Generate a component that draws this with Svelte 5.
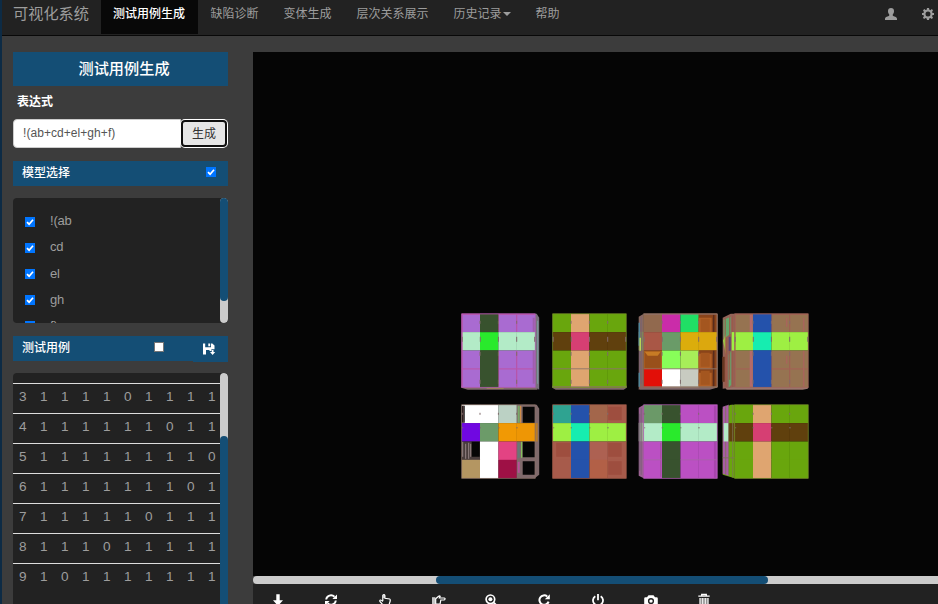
<script>
  const nav = [
    { label: '测试用例生成', active: true },
    { label: '缺陷诊断' },
    { label: '变体生成' },
    { label: '层次关系展示' },
    { label: '历史记录', caret: true },
    { label: '帮助' }
  ];
  let expression = $state('!(ab+cd+el+gh+f)');
  const models = ['!(ab', 'cd', 'el', 'gh', 'f)'];
  const cases = [
    [3, 1, 1, 1, 1, 0, 1, 1, 1, 1],
    [4, 1, 1, 1, 1, 1, 1, 0, 1, 1],
    [5, 1, 1, 1, 1, 1, 1, 1, 1, 0],
    [6, 1, 1, 1, 1, 1, 1, 1, 0, 1],
    [7, 1, 1, 1, 1, 1, 0, 1, 1, 1],
    [8, 1, 1, 1, 0, 1, 1, 1, 1, 1],
    [9, 1, 0, 1, 1, 1, 1, 1, 1, 1]
  ];
  const tools = ['down', 'refresh', 'up', 'right', 'zoom', 'repeat', 'power', 'camera', 'trash'];

  const P = '#a96bd1', D = '#38522e', M = '#b3ebc7', G = '#29ea2c';
  const L = '#69a60d', O = '#dfa570', B = '#60400d', K = '#d63f73';
  const T = '#967351', U = '#2452ab', Y = '#9eef43', A = '#16edb0';
  const R = '#a75b4b', V = '#bb50c3', W = '#ffffff', N = '#060606', H = '#806a6b';
  // Sixteen face colours per cube, row by row.
  const cubes = [
    { x: 462, y: 314, side: 'right', bottom: true, line: '#b75bb2', c: [P, D, P, P, M, G, M, M, P, D, P, P, P, D, P, P] },
    { x: 553, y: 314, side: '', bottom: true, line: '#78902a', c: [L, O, L, L, B, K, B, B, L, O, L, L, L, O, L, L] },
    { x: 644, y: 314, side: 'left', bottom: true, line: '#8b6d5b', c: ['#91694e', '#ca2ca9', '#20df65', '#a85b28', '#a95746', '#6a9b68', '#dbad0c', '#dca80e', '#ad601f', '#88fe59', '#a7ee59', '#a85b28', '#e20f08', W, '#c8cbc1', '#a85b28'] },
    { x: 735, y: 314, side: 'wide', bottom: true, line: '#a2655b', c: [T, U, T, T, Y, A, Y, Y, T, U, T, T, T, U, T, T] },
    { x: 462, y: 405, side: 'right', line: '#887066', c: [W, W, '#bbd1c4', H, '#7008e1', '#6c9b69', '#f19904', '#ee9605', '#493d3c', W, '#e34383', H, '#b49662', W, '#9e1045', H] },
    { x: 553, y: 405, side: '', line: '#a45e4c', c: ['#2fa391', U, '#a3664b', R, Y, A, Y, Y, R, U, '#ad6152', R, R, U, '#b26047', R] },
    { x: 644, y: 405, side: 'left', line: '#b760b9', c: ['#6b9968', D, V, V, M, G, M, M, V, D, V, V, V, D, V, V] },
    { x: 735, y: 405, side: 'wide', line: '#78902a', c: [L, O, L, L, B, K, B, B, L, O, L, L, L, O, L, L] }
  ];
  const at = [0, 18.3, 36.7, 55];
</script>

{#snippet icon(name)}
  <svg class="icon" viewBox="0 0 12 12" aria-hidden="true">
    {#if name === 'user'}
      <path d="M6 0C8 0 9 1 9 3C9 4.8 8.5 5.7 7.8 6.3V7.8C8.8 8.6 11.8 8.7 12 10.8V12H0V10.8C.2 8.7 3.2 8.6 4.2 7.8V6.3C3.5 5.7 3 4.8 3 3C3 1 4 0 6 0Z" />
    {:else if name === 'cog'}
      <path fill-rule="evenodd" d="M5 0H7L7.4 1.8L8.4 2.2L9.9 1.1L11 2.4L10.1 3.8L10.5 5H12V7H10.5L10.1 8.3L11 9.7L9.8 11L8.3 10L7.2 10.4L7 12H5L4.7 10.4L3.5 10L2.1 11L.9 9.7L1.9 8.3L1.5 7H0V5H1.5L1.9 3.8L1 2.4L2.2 1.1L3.6 2.1L4.7 1.7ZM6 3.5A2.5 2.5 0 1 0 6 8.5A2.5 2.5 0 1 0 6 3.5Z" />
    {:else if name === 'save'}
      <path fill-rule="evenodd" d="M0 .5H2.2V4.2H8V.5H9.3L11.5 2.6V6.2H8.4V8H6.5V7H3V11.5H0ZM5.3 .5H7.2V3.2H5.3ZM8.8 7H10.5V9H12.2L9.6 12L7 9H8.8Z" />
    {:else if name === 'down'}
      <path d="M4.3 .2H7.7V6.2H11L6 12L1 6.2H4.3Z" />
    {:else if name === 'refresh'}
      <path d="M1.2 5.5C1.6 1.6 6.5-.1 9.5 2.8M10.8 6.5C10.4 10.4 5.5 12.1 2.5 9.2" fill="none" stroke="currentColor" stroke-width="1.9" />
      <path d="M12 .4V5H7.4ZM0 11.6V7H4.6Z" />
    {:else if name === 'up'}
      <path d="M3.8 7V1.5Q3.9.5 4.8.5T5.9 1.5V4.3L10.7 5Q11.5 5.4 11.2 7L9.8 11.5H4.5L.9 7.5Q.5 6.2 1.5 6Q2.5 5.9 3.8 7.5" fill="none" stroke="currentColor" stroke-width="1.2" />
      <path d="M3.8 1H6V4H3.8Z" opacity=".65" />
    {:else if name === 'right'}
      <path d="M0 3.2H3.4V10H0Z" opacity=".75" />
      <path d="M3.7 4.8L6.6 2.2Q7.7 1.4 8.2 2.2L7.4 4H12.2Q13.2 4.2 13 5.1T12 6H8.8L8.1 9.9L3.7 10.2Z" fill="none" stroke="currentColor" stroke-width="1.2" />
    {:else if name === 'zoom'}
      <circle cx="5.4" cy="5.3" r="4.3" fill="none" stroke="currentColor" stroke-width="1.7" />
      <circle cx="5.4" cy="5.3" r="2" />
      <path d="M8 9.2L9.5 8L12.4 11L11 12.4Z" />
    {:else if name === 'repeat'}
      <path d="M9.2 2.5A4.7 4.7 0 1 0 10.6 7.6" fill="none" stroke="currentColor" stroke-width="2" />
      <path d="M11.8 .3V5.3H6.8Z" />
    {:else if name === 'power'}
      <path d="M3.3 2.2A5 5 0 1 0 8.7 2.2" fill="none" stroke="currentColor" stroke-width="1.8" />
      <path d="M5.1 0H6.9V6.2H5.1Z" />
    {:else if name === 'camera'}
      <path fill-rule="evenodd" d="M3.5 1.2H8.5L10 3.2H11.5Q12.8 3.3 12.8 4.5V11H-.8V4.5Q-.8 3.3.5 3.2H2ZM6 4A3.1 3.1 0 1 0 6 10.2A3.1 3.1 0 1 0 6 4Z" />
      <circle cx="6" cy="7.1" r="1.7" />
    {:else if name === 'trash'}
      <path d="M3.7 1.4V.5H8.3V1.4M.3 2.2H11.7" fill="none" stroke="currentColor" stroke-width="1.3" />
      <path d="M1.5 4H10.5V12H1.5Z" opacity=".5" />
      <path d="M2 4V12M4.7 4V12M7.3 4V12M10 4V12" stroke="currentColor" stroke-width="1" />
    {/if}
  </svg>
{/snippet}

{#snippet check(on)}
  <span class="check" class:on role="checkbox" aria-checked={on} tabindex="0">
    {#if on}<svg viewBox="0 0 10 10"><path d="M2 5.2L4.1 7.2L8 2.7" fill="none" stroke="#fff" stroke-width="1.7" /></svg>{/if}
  </span>
{/snippet}

<div class="page">
  <header>
    <span class="brand">可视化系统</span>
    <nav>
      {#each nav as item}
        <a href="#top" class:active={item.active}>{item.label}{#if item.caret}<i class="caret"></i>{/if}</a>
      {/each}
    </nav>
    <div class="account">{@render icon('user')}{@render icon('cog')}</div>
  </header>

  <div class="body">
    <aside>
      <h1>测试用例生成</h1>
      <span class="label">表达式</span>
      <div class="entry">
        <input bind:value={expression} />
        <button>生成</button>
      </div>

      <div class="bar first"><b>模型选择</b>{@render check(true)}</div>
      <div class="panel models">
        <ul>
          {#each models as model}
            <li>{@render check(true)}<span>{model}</span></li>
          {/each}
        </ul>
        <div class="scroll"><div class="thumb upper"></div></div>
      </div>

      <div class="bar second"><b>测试用例</b>{@render check(false)}<span class="save">{@render icon('save')}</span></div>
      <div class="panel cases">
        <div class="rows">
          {#each cases as row}
            <div class="row">{#each row as value}<span>{value}</span>{/each}</div>
          {/each}
        </div>
        <div class="scroll"><div class="thumb lower"></div></div>
      </div>
    </aside>

    <main>
      <svg class="scene" viewBox="253 52 685 524">
        {#each cubes as q, n}
          <g transform="translate({q.x - 0.3} {q.y - 0.2})">
            {#if q.bottom}
              <path d={q.side === 'wide' ? 'M-11 72L0 73H74L73 75L68 76H-8Z' : q.side === 'left' ? 'M-5 72H74L73 74L66 76H-4Z' : q.side === 'right' ? 'M-.5 72H74L76 76H6L-.5 74Z' : 'M-.5 72H74V74L71 76H3L-.5 74Z'} fill={n === 3 ? '#9a756c' : '#80686b'} />
            {/if}
            {#if q.side === 'right'}
              <path d="M73 0H75L77.500 4V{q.bottom ? 76 : 70}L73 73.500Z" fill={n === 0 ? '#79717e' : '#806a6b'} />
            {:else if q.side === 'left'}
              <path d="M0 0L-5 3V{n === 2 ? 76 : 71}L0 73.500Z" fill={n === 2 ? '#876860' : '#9b6192'} />
              <path d="M-5 18H0V36.500H-5Z" fill={n === 2 ? '#808457' : '#9ea696'} />
              <path d="M-4 9V66M-2.500 3V70" stroke="#766176" stroke-width=".8" />
            {:else if q.side === 'wide'}
              <path d="M0 0H-4L-12 4V{n === 3 ? 75 : 70}L0 73.500Z" fill={n === 3 ? '#936458' : L} />
              {#if n === 3}
                <path d="M-3 18.300H0V36.700H-3Z" fill={Y} />
                <path d="M-11 6L-4 3V20L-11 25Z" fill="#64a66c" />
                <path d="M-11.500 27L-9 20V41Z" fill={Y} />
                <path d="M-6 41L-3.500 37V71L-6 74Z" fill="#63a66c" />
                <path d="M-11 43V68" stroke="#653620" stroke-width="3" />
                <path d="M-8 24V73M-5 3V66M-9.500 5V73M-2 2V18M-2 37V73" stroke="#9d5848" stroke-width="1" />
                <path d="M-5 23V37" stroke="#5a4478" stroke-width="2" />
              {:else}
                <path d="M-12 2L-6 0V71L-12 69Z" fill="#a95ea5" />
                <path d="M-11 18.300H-6V36.700H-11Z" fill={M} />
                <path d="M-6 18.300H0V36.700H-6Z" fill={B} />
                <path d="M-9 1V18M-9 37V70M-6 0V71M-2 0V73M-12 53H0" stroke="#7c7457" stroke-width=".8" />
              {/if}
            {/if}
            {#each q.c as fill, i}
              <rect x={at[i % 4]} y={at[Math.floor(i / 4)]} width="18.500" height="18.500" {fill} />
            {/each}

            {#if n === 0 || n === 3}
              <path d="M0 .5H73M.5 0V73M19 0V18M19 37V73M36.700 0V18M36.700 37V73M55 0V18M55 37V73M0 55H73" fill="none" stroke={n === 0 ? '#c150a0' : '#a75c56'} stroke-width="1.300" opacity=".7" />
              <rect x="18.300" y=".5" width="18.300" height="17.800" fill={q.c[1]} />
              <rect x="18.300" y="36.700" width="18.300" height="36.500" fill={q.c[1]} />
              {#if n === 3}
                <path d="M16.500 1V18M16.500 37V73" stroke="#b46a6a" stroke-width="3" />
                <path d="M69 4V18M69 37V73M52 4V13M52 42V50" stroke="#a8655b" stroke-width="1.500" />
              {:else}
                <path d="M72 4V18M72 37V70" stroke="#9e5fae" stroke-width="2" />
                <path d="M76 7V70" stroke="#78a0a0" stroke-width="1" />
                <path d="M25 74.500H42" stroke="#a08558" stroke-width="1" />
              {/if}
            {:else if n === 2}
              <path d="M55 0H73V18.300H55ZM55 36.700H73V73H55Z" fill="#8a441a" />
              <path d="M55 4H68V18.300H55ZM55 40H68V55H55ZM55 59H68V73H55Z" fill="#b26027" />
              <path d="M57 5H66V18H57ZM57 39H66V53H57ZM57 57H66V71H57Z" fill="#a4561f" />
              <path d="M1 38H17V54H1Z" fill="#99501b" />
              <path d="M1 38H17L14 42H4Z" fill="#c77b25" />
              <path d="M70 1V18M70 37V73" stroke="#572b1c" stroke-width="1.500" />
              <path d="M-4.500 9V32M-4.500 59V73" stroke="#458fa8" stroke-width="1.200" />
              <path d="M-3.500 24V37" stroke="#bdd957" stroke-width="1.500" />
              <path d="M0 .3H73.500V73.200" fill="none" stroke="#947778" stroke-width=".9" />
            {:else if n === 4}
              <path d="M61 2H73V18H61ZM61 37H73V52.500H61ZM61 56.500H73V70H61Z" fill={N} />
              <path d="M0 1H3V18H0ZM10 37H18V52H10Z" fill={N} />
              <path d="M1 37V52M4 39V54M7 38V54M9 39V52" stroke="#a09090" stroke-width=".9" />
              <path d="M1.500 1V18" stroke="#8a6868" stroke-width=".8" />
              <path d="M57 1V18" stroke="#78a866" stroke-width="2" />
              <path d="M59 1V18" stroke="#e49642" stroke-width="1" />
              <path d="M57 38V53" stroke="#647a78" stroke-width="2" />
              <path d="M60 37V53" stroke="#83d657" stroke-width="1" />
              <path d="M57 57V68" stroke="#b94f99" stroke-width="2" />
              <path d="M73 18.300H76V36.700H73Z" fill="#b87b2a" />
            {:else if n === 5}
              <path d="M55.500 2H69V15.500H55.500ZM3.500 38H17.500V52H3.500ZM55.500 38H69V52H55.500ZM55.500 56.500H69V70H55.500Z" fill="#9e4e3f" />
            {:else if n === 6}
              <path d="M71.500 1V18M71.500 37V73" stroke="#a746ad" stroke-width="2.500" />
              <path d="M17 38V72" stroke="#a74fa5" stroke-width="1.200" />
              <path d="M0 55H18M37 55H73" stroke="#a568a4" stroke-width=".8" />
            {/if}
            {#if n === 1 || n === 2}
              <path d="M0 55H73.500M0 73H73.500" stroke="#8c746a" stroke-width=".9" />
            {/if}
            <rect x="0" y="0" width="73.500" height="73.500" fill="none" stroke={q.line} stroke-width=".7" />
            {#if q.bottom}
              <path d="M.5 23V28M18.600 23V28M36.700 23V28M55 23V28M73 23V28M18.300 7V10M36.700 7V10M55 7V10M18.300 38V42M36.700 38V42M55 38V42M18.300 66V70M36.700 66V70M55 66V70" stroke="#806b6b" stroke-width="1" />
            {:else}
              <path d="M.5 8V10M18.300 8V10M36.700 8V10M55 8V10M.5 23H1.500M18 23H19.300M36.400 23H37.700M54.500 23H56" stroke="#806b6b" stroke-width="1" />
            {/if}
          </g>
        {/each}
      </svg>
      <div class="hscroll"><div class="hthumb"></div></div>
      <footer>
        {#each tools as tool}
          <span class="tool">{@render icon(tool)}</span>
        {/each}
      </footer>
    </main>
  </div>
</div>

<style>
  :global(body) { background: #3c3c3c; overflow: hidden; }
  * { box-sizing: border-box; }
  .page {
    height: 604px; width: 938px; overflow: hidden; display: flex; flex-direction: column;
    border-left: 2px solid #0d2b45; background: #3c3c3c; color: #9d9d9d;
    font: 12px/18px "Liberation Sans", "Noto Sans CJK SC", sans-serif;
  }
  .icon { width: 12px; height: 12px; display: block; overflow: visible; fill: currentColor; flex: none; }
  header { height: 36px; flex: none; display: flex; background: #222; border-bottom: 1px solid #080808; }
  .brand { width: 99px; padding: 3px 0 0 11px; font-size: 15.200px; line-height: 22px; white-space: nowrap; }
  nav { display: flex; height: 34px; }
  nav a { padding: 5px 12.500px 0; color: #9d9d9d; text-decoration: none; white-space: nowrap; }
  nav a.active { background: #080808; color: #fff; width: 97px; font-weight: 500; padding-left: 12px; }
  .caret { display: inline-block; border: 4px solid transparent; border-top-color: #9d9d9d; border-bottom: 0; margin-left: 1px; vertical-align: 2px; }
  .account { display: flex; gap: 25px; margin: 8px 4px 0 auto; }
  .body { flex: 1; min-height: 0; display: flex; padding: 16px 0 0 11px; }
  aside { width: 215px; flex: none; display: flex; flex-direction: column; }
  h1 { height: 34px; margin: 0 0 7px; padding-left: 7px; background: #144e75; color: #fff; font-size: 15.200px; font-weight: 500; line-height: 33px; text-align: center; flex: none; }
  .label { color: #fff; font-weight: 600; height: 26px; padding-left: 4px; flex: none; }
  .entry { display: flex; height: 29px; flex: none; }
  input { width: 168px; border: 1px solid #ccc; border-radius: 4px 0 0 4px; background: #fff; padding: 0 0 2px 9px; color: #555; font: 12px "Liberation Sans", sans-serif; letter-spacing: .06px; outline: none; }
  button { width: 46px; margin: 1px 0; padding: 0 0 2px; background: #e6e6e6; color: #333; border: 2px solid #101010; border-radius: 4px; box-shadow: 0 0 0 1px #fff; font: 12px "Noto Sans CJK SC", sans-serif; }
  .bar { height: 25px; flex: none; display: flex; align-items: flex-start; background: #144e75; color: #fff; padding-left: 9px; }
  .bar b { font-weight: 500; line-height: 24px; flex: 1; }
  .first { margin: 13px 0 12px; }
  .first .check { margin: 6px 12px 0 0; }
  .second { margin: 13px 0 12px; }
  .second .check { margin-top: 6px; }
  .save { margin-left: 29px; width: 35px; height: 26px; padding: 7px 0 0 9.500px; background: #144e75; }
  .check { width: 10px; height: 10px; flex: none; background: #fff; outline: 1px solid #767676; outline-offset: -1px; }
  .check.on { background: #0075ff; outline: none; }
  .check svg { display: block; width: 10px; height: 10px; }
  .panel { display: flex; background: #222; overflow: hidden; border-radius: 4px; }
  .models { height: 125px; flex: none; }
  ul { flex: 1; margin: 0; padding: 10px 0 0 12px; list-style: none; font-size: 13px; line-height: 26px; letter-spacing: -.2px; }
  li { display: flex; height: 26px; }
  li .check { margin: 9px 15px 0 0; }
  li:nth-child(n + 3) { line-height: 28px; }
  .scroll { width: 8px; flex: none; background: #ccc; border-radius: 4px; }
  .thumb { background: #144e75; border-radius: 4px; }
  .upper { height: 103px; }
  .lower { height: 200px; margin-top: 63px; }
  .cases { flex: 1; border-radius: 4px 4px 0 0; }
  .rows { flex: 1; min-width: 0; padding-top: 10px; }
  .row { height: 30px; border-top: 1px solid #ddd; display: flex; font-size: 13.600px; line-height: 26px; }
  .row span { width: 21px; flex: none; padding-left: 6px; }
  main { margin-left: 25px; width: 685px; display: flex; flex-direction: column; }
  .scene { display: block; width: 685px; height: 524px; background: #050505; flex: none; }
  .hscroll { height: 8px; flex: none; background: #ccc; border-radius: 4px 0 0 4px; }
  .hthumb { width: 332px; height: 8px; margin-left: 183px; border-radius: 4px; background: #144e75; }
  footer { flex: 1; display: flex; background: #222; color: #fff; padding: 10px 0 0 19px; }
  .tool { width: 53.250px; flex: none; }
</style>
